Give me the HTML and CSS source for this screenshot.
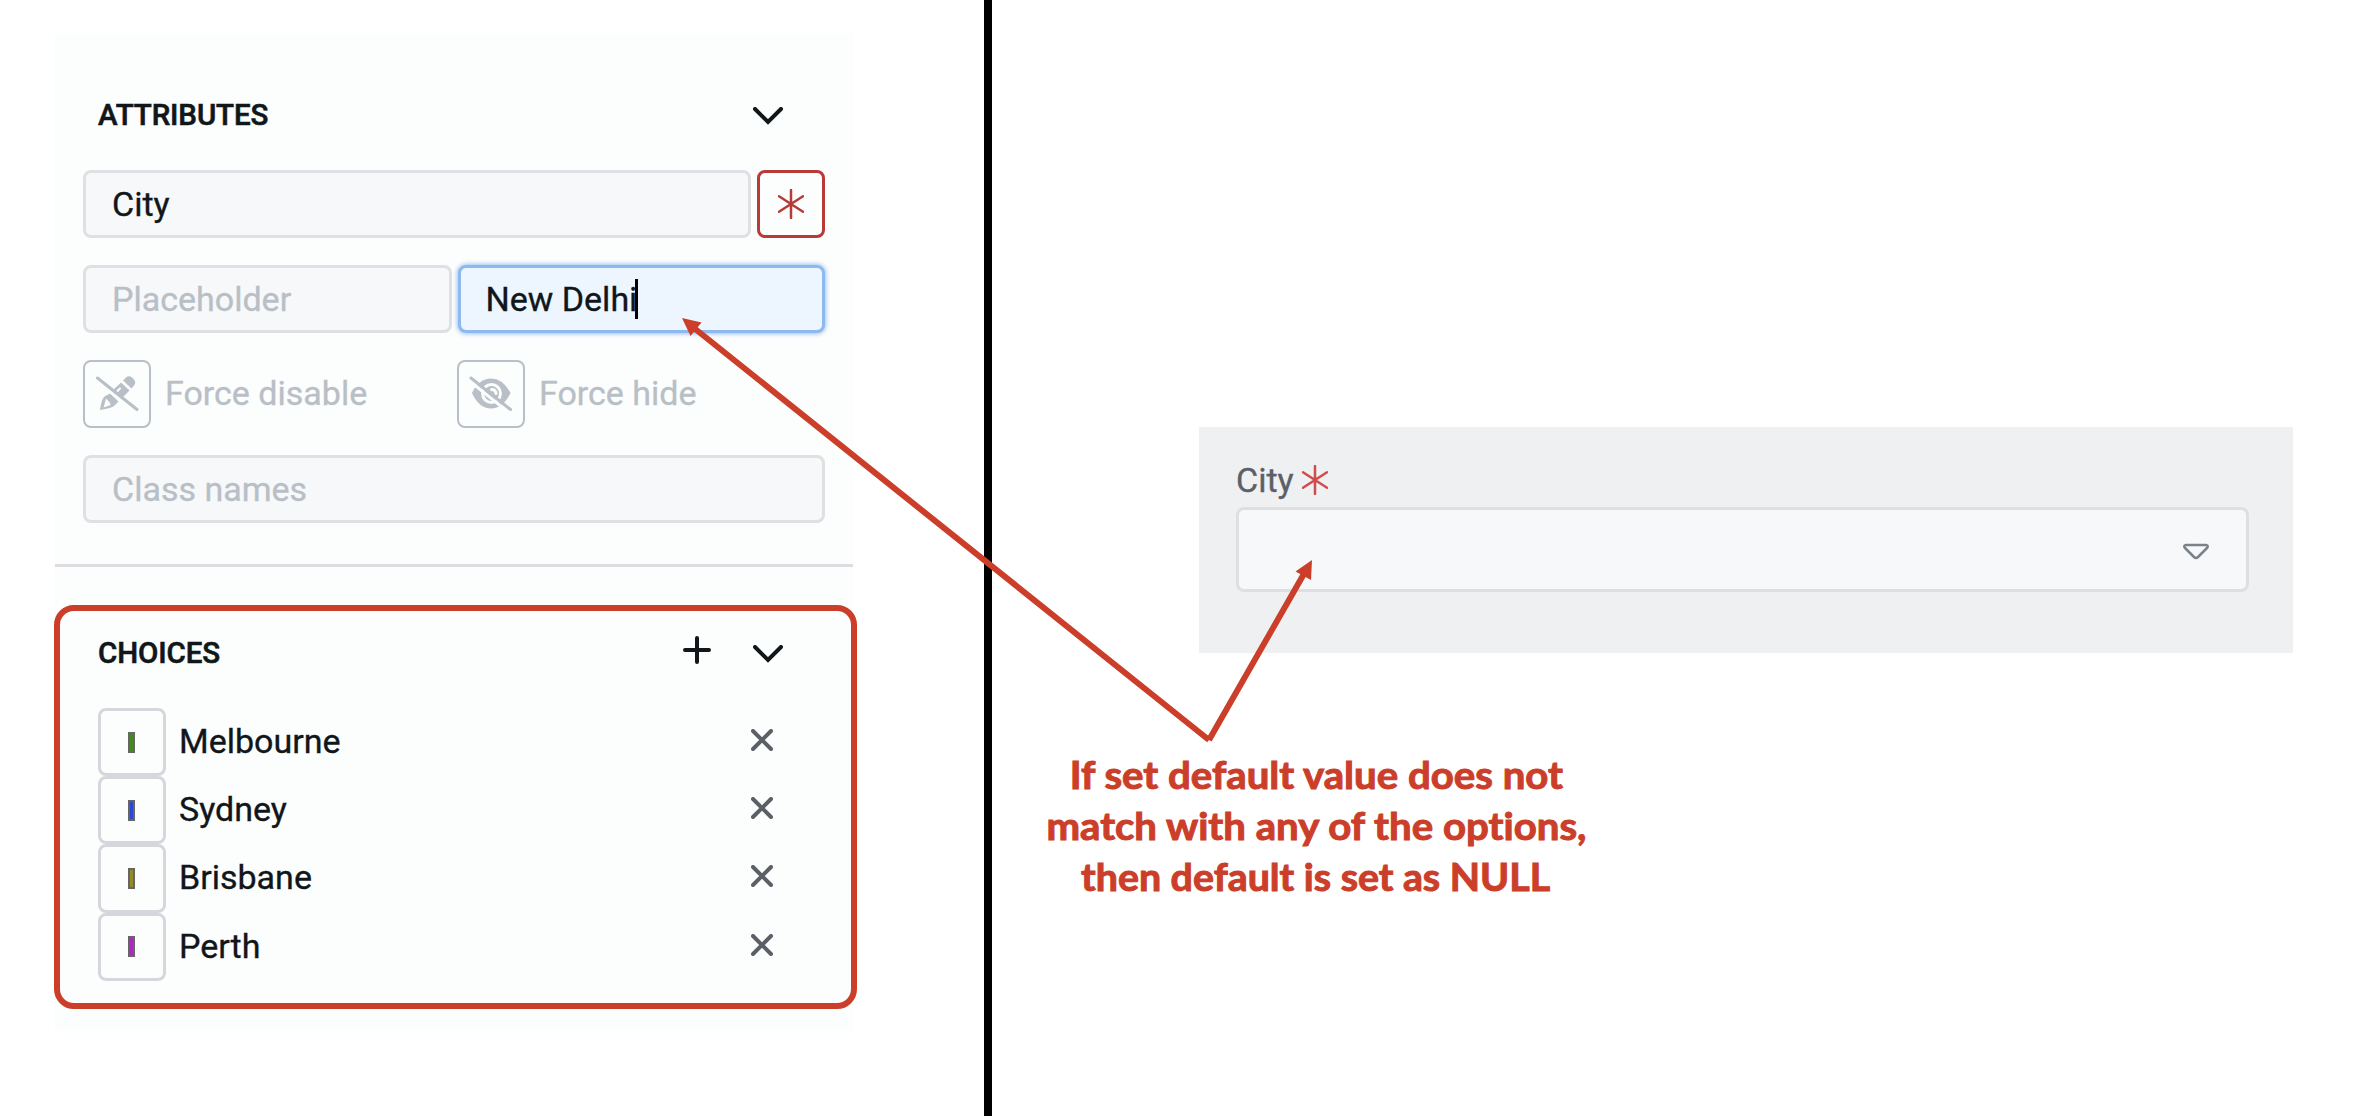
FILE: index.html
```html
<!DOCTYPE html>
<html lang="en">
<head>
<meta charset="utf-8">
<title>Default value</title>
<link rel="stylesheet" href="styles.css">
</head>
<body>
<main class="page">
  <section class="left">
    <div class="panel">
      <div class="section attributes">
        <header class="heading">
          <h2>ATTRIBUTES</h2>
          <svg class="chevron" width="30" height="18" viewBox="0 0 30 18"><path d="M2 2 15 15 28 2"/></svg>
        </header>
        <div class="row">
          <div class="field grow"><span>City</span></div>
          <div class="square required"><svg class="star" width="26" height="30" viewBox="0 0 26 30"><path d="M13 1V29M1 7.3 25 22.7M25 7.3 1 22.7"/></svg></div>
        </div>
        <div class="row">
          <div class="field grow hint"><span>Placeholder</span></div>
          <div class="field grow focused"><span>New Delhi</span><i class="caret"></i></div>
        </div>
        <div class="row">
          <div class="toggle grow">
            <div class="square">
              <svg width="44" height="38" viewBox="0 0 44 38">
                <path class="solid" d="M28 5.5 31 2.5Q34 0 37 2.5L39 4.5Q41.5 7.5 39 10.5L36.5 13.5ZM26 7.5 34.5 15.5 25 25 16.5 16.5ZM15 18.5 23.5 26.5 19 31Q17 33 5 35 6.5 24 9.5 21.5Z"/>
                <path class="hole thin" d="M22.5 16 25 13.5M10 31 11.5 25.5 13.5 27.5 14.5 29.5Z"/>
                <path class="cut" d="M3 6.5 39 36"/>
                <path class="slash" d="M2.5 3 42 34.5"/>
              </svg>
            </div>
            <span>Force disable</span>
          </div>
          <div class="toggle grow">
            <div class="square">
              <svg width="44" height="38" viewBox="0 0 44 38">
                <path class="solid" d="M3 18Q10 3.5 22 3.5T41.5 18Q34 33.5 22 33.5T3 18Z"/>
                <circle class="ring" cx="22.5" cy="18.5" r="9"/>
                <path class="hole" d="M22.5 14.5Q26.5 14.5 27 18.5"/>
                <path class="cut" d="M0 5.5 39 37"/>
                <path class="slash" d="M2 3 41.5 34.5"/>
              </svg>
            </div>
            <span>Force hide</span>
          </div>
        </div>
        <div class="row">
          <div class="field grow hint"><span>Class names</span></div>
        </div>
      </div>
      <div class="section choices">
        <header class="heading">
          <h2>CHOICES</h2>
          <svg class="plus" width="28" height="28" viewBox="0 0 28 28"><path d="M14 2V26M2 14H26"/></svg>
          <svg class="chevron" width="30" height="18" viewBox="0 0 30 18"><path d="M2 2 15 15 28 2"/></svg>
        </header>
        <ul>
          <li><div class="swatch"><i class="green"></i></div><span>Melbourne</span><svg class="remove" width="22" height="22" viewBox="0 0 22 22"><path d="M2 2 20 20M20 2 2 20"/></svg></li>
          <li><div class="swatch"><i class="blue"></i></div><span>Sydney</span><svg class="remove" width="22" height="22" viewBox="0 0 22 22"><path d="M2 2 20 20M20 2 2 20"/></svg></li>
          <li><div class="swatch"><i class="olive"></i></div><span>Brisbane</span><svg class="remove" width="22" height="22" viewBox="0 0 22 22"><path d="M2 2 20 20M20 2 2 20"/></svg></li>
          <li><div class="swatch"><i class="purple"></i></div><span>Perth</span><svg class="remove" width="22" height="22" viewBox="0 0 22 22"><path d="M2 2 20 20M20 2 2 20"/></svg></li>
        </ul>
        <div class="highlight"></div>
      </div>
    </div>
  </section>
  <section class="right">
    <div class="preview">
      <div class="label"><span>City</span><svg class="star" width="26" height="30" viewBox="0 0 26 30"><path d="M13 1V29M1 7.3 25 22.7M25 7.3 1 22.7"/></svg></div>
      <div class="select"><svg width="28" height="18" viewBox="0 0 28 18"><path d="M4 2H24Q27 3 25 5L16 14Q14 16 12 14L3 5Q1 3 4 2Z"/></svg></div>
    </div>
    <p class="note"><span>If set default value does not</span><span>match with any of the options,</span><span class="last">then default is set as NULL</span></p>
  </section>
  <svg class="arrows" width="2370" height="1116" viewBox="0 0 2370 1116">
    <path class="line" d="M694 328 1209 740M1209 740 1305 572"/>
    <path class="head" d="M682 318 701.5 322.5 690.5 336ZM1312 560 1295.5 571.5 1311 580Z"/>
  </svg>
</main>
</body>
</html>
```
FILE: styles.css
```css
* { box-sizing: border-box; }
body { margin: 0; background: #fff; font-family: Roboto, sans-serif; font-size: 34px; line-height: 40px; color: #10161a; -webkit-text-stroke: .35px; }
h2, ul, p { margin: 0; padding: 0; }
svg { display: block; flex: none; fill: none; stroke-linecap: round; }
.page { position: relative; display: flex; width: 2370px; height: 1116px; overflow: hidden; }
.left { width: 992px; border-right: 8px solid #000; padding: 33px 0 0 55px; }
.panel { width: 798px; height: 998px; background: #fcfdfd; }
.attributes { height: 534px; padding: 61px 28px 0; border-bottom: 3px solid #dcdce1; }
.heading { display: flex; align-items: center; height: 40px; padding: 0 42px 0 15px; }
h2 { flex: 1; padding-top: 2px; font-size: 29.5px; line-height: 40px; font-weight: 500; letter-spacing: -.1px; -webkit-text-stroke: .6px; }
.chevron, .plus { stroke: #10161a; stroke-width: 4; }
.chevron { margin-top: 4px; }
.attributes .heading { margin-bottom: 36px; }
.row { display: flex; gap: 6px; height: 68px; margin-bottom: 27px; }
.grow { flex: 1 1 0; }
.field { display: flex; align-items: center; padding-left: 26px; border: 3px solid #dfe0e4; border-radius: 8px; background: #f7f8fa; }
.hint, .toggle { color: #b9bfc6; }
.focused { padding-left: 25px; background: #edf5ff; border-color: #8db9ee; box-shadow: 0 0 4px 1px #9cc3f2; }
.caret { width: 3px; height: 40px; background: #000; margin-left: -2px; }
.square { display: flex; align-items: center; justify-content: center; width: 68px; height: 68px; border: 2px solid #b9bfc6; border-radius: 8px; flex: none; }
.required { border: 3px solid #b93a37; }
.star { stroke: #b83a38; stroke-width: 2.5; }
.toggle { display: flex; align-items: center; gap: 14px; }
.toggle span, li span { padding-bottom: 2px; }
.solid { fill: #b9bfc6; }
.hole, .cut, .ring { stroke: #fcfdfd; stroke-width: 3; }
.thin { stroke-width: 2; fill: #fcfdfd; }
.slash { stroke: #b9bfc6; stroke-width: 3; }
.choices { position: relative; padding: 65px 28px 0; }
.choices .heading { height: 40px; }
.plus { margin: -4px 42px 0 0; }
ul { list-style: none; padding: 36px 0 0 15px; }
li { display: flex; align-items: center; height: 68.2px; }
li span { flex: 1; padding-left: 13px; }
.swatch { width: 68px; height: 68.2px; border: 3px solid #d6d7dd; border-radius: 8px; display: flex; align-items: center; justify-content: center; }
.swatch i { width: 7px; height: 21px; border: 2px solid #666; margin-right: 1px; }
.green { background: #42891f; }
.blue { background: #2849d0; }
.olive { background: #948a28; }
.purple { background: #a82bbb; }
.remove { stroke: #5c6066; stroke-width: 4; margin: 0 52px 4px 0; }
.highlight { position: absolute; left: -1px; top: 38px; width: 803px; height: 404px; border: 6px solid #cb3e29; border-radius: 20px; }
.right { flex: 1; padding: 427px 0 0 207px; }
.preview { width: 1094px; height: 226px; padding: 33px 44px 0 37px; background: #eff0f2; }
.label { display: flex; align-items: center; height: 40px; gap: 8px; color: #5a6067; }
.label .star { stroke: #d24b4b; }
.select { display: flex; align-items: center; justify-content: flex-end; height: 85px; margin-top: 7px; padding: 4px 36px 0 0; border: 3px solid #dedfe2; border-radius: 8px; background: #f7f8fa; }
.select svg { stroke: #7b8288; stroke-width: 2.5; }
.note { display: flex; flex-direction: column; align-items: center; width: 560px; margin: 96px 0 0 -163px; font: 700 38px/51px Lato, sans-serif; font-variant-ligatures: none; color: #cb3e29; white-space: nowrap; -webkit-text-stroke: 1px; }
.note span { transform: scaleX(1.057); }
.note .last { transform: scaleX(1.035); }
.arrows { position: absolute; left: 0; top: 0; }
.line { stroke: #cb3e29; stroke-width: 6; stroke-linecap: butt; }
.head { fill: #cb3e29; }
```
